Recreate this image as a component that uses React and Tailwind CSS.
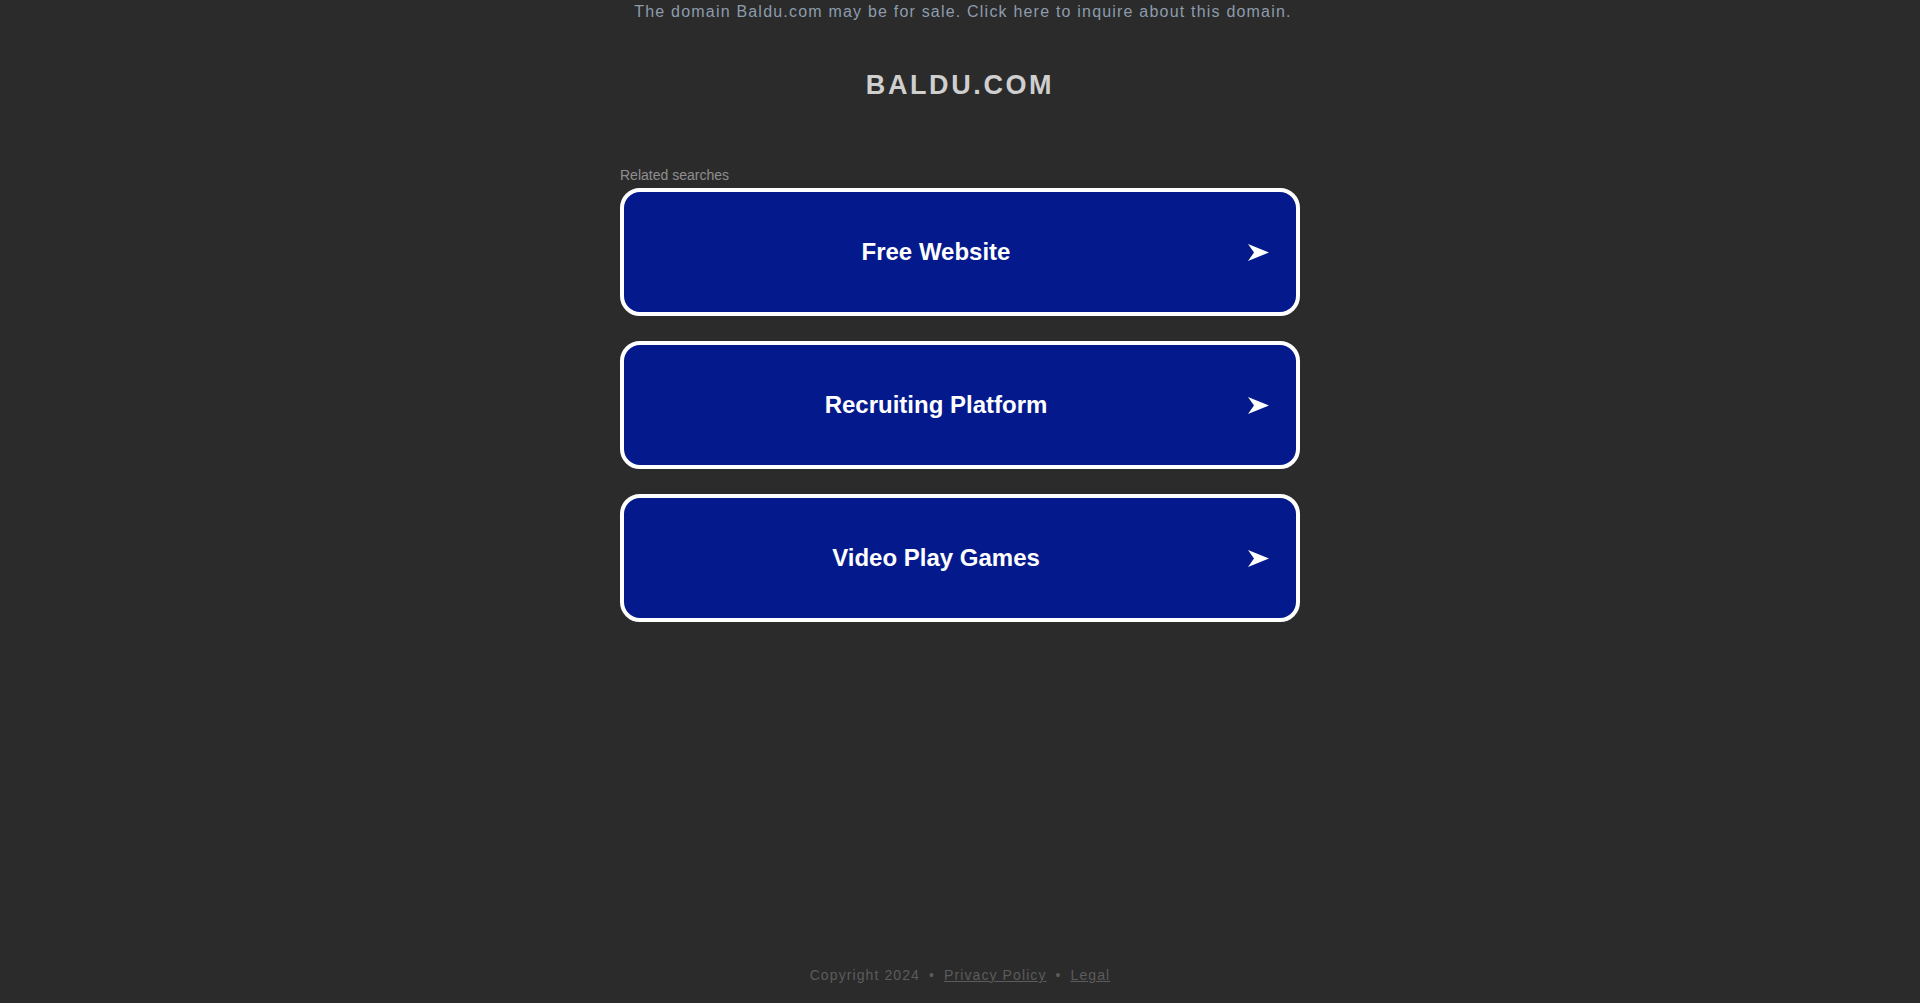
import React from "react";

const searches = ["Free Website", "Recruiting Platform", "Video Play Games"];

const Arrow = () => (
  <svg width="21" height="17" viewBox="0 0 21 17" className="shrink-0">
    <path d="M0 0 L21 8.5 L0 17 L6 8.5 Z" fill="#ffffff" />
  </svg>
);

const App = () => {
  return (
    <div
      className="h-screen min-h-[1003px] w-full bg-[#2b2b2b] flex flex-col items-center"
      style={{ fontFamily: '"Liberation Sans", Arial, sans-serif' }}
    >
      <a className="pt-[1px] pl-[6px] text-[16px] leading-[22px] tracking-[1.2px] text-[#8d9cad] cursor-pointer">
        The domain Baldu.com may be for sale. Click here to inquire about this domain.
      </a>

      <h1 className="mt-[46px] text-[27px] leading-[32px] font-bold tracking-[2.6px] text-[#cfcfcf]">
        BALDU.COM
      </h1>

      <div className="mt-[66px] w-[680px]">
        <p className="text-[14px] leading-[16px] text-[#8f8f8f]">Related searches</p>

        <div className="mt-[5px] flex flex-col gap-[25px]">
          {searches.map((s) => (
            <a
              key={s}
              className="h-[128px] flex items-center rounded-[20px] border-4 border-white bg-[#041a8c] cursor-pointer"
            >
              <span className="flex-1 text-center text-[24px] font-bold text-white">{s}</span>
              <span className="pr-[27px]">
                <Arrow />
              </span>
            </a>
          ))}
        </div>
      </div>

      <footer className="mt-auto pb-[18px] text-[14px] leading-[20px] tracking-[1.1px] text-[#5c5c5c]">
        Copyright 2024 <span className="mx-[4px]">•</span>{" "}
        <a className="underline cursor-pointer">Privacy Policy</a>{" "}
        <span className="mx-[4px]">•</span> <a className="underline cursor-pointer">Legal</a>
      </footer>
    </div>
  );
};

export default App;
